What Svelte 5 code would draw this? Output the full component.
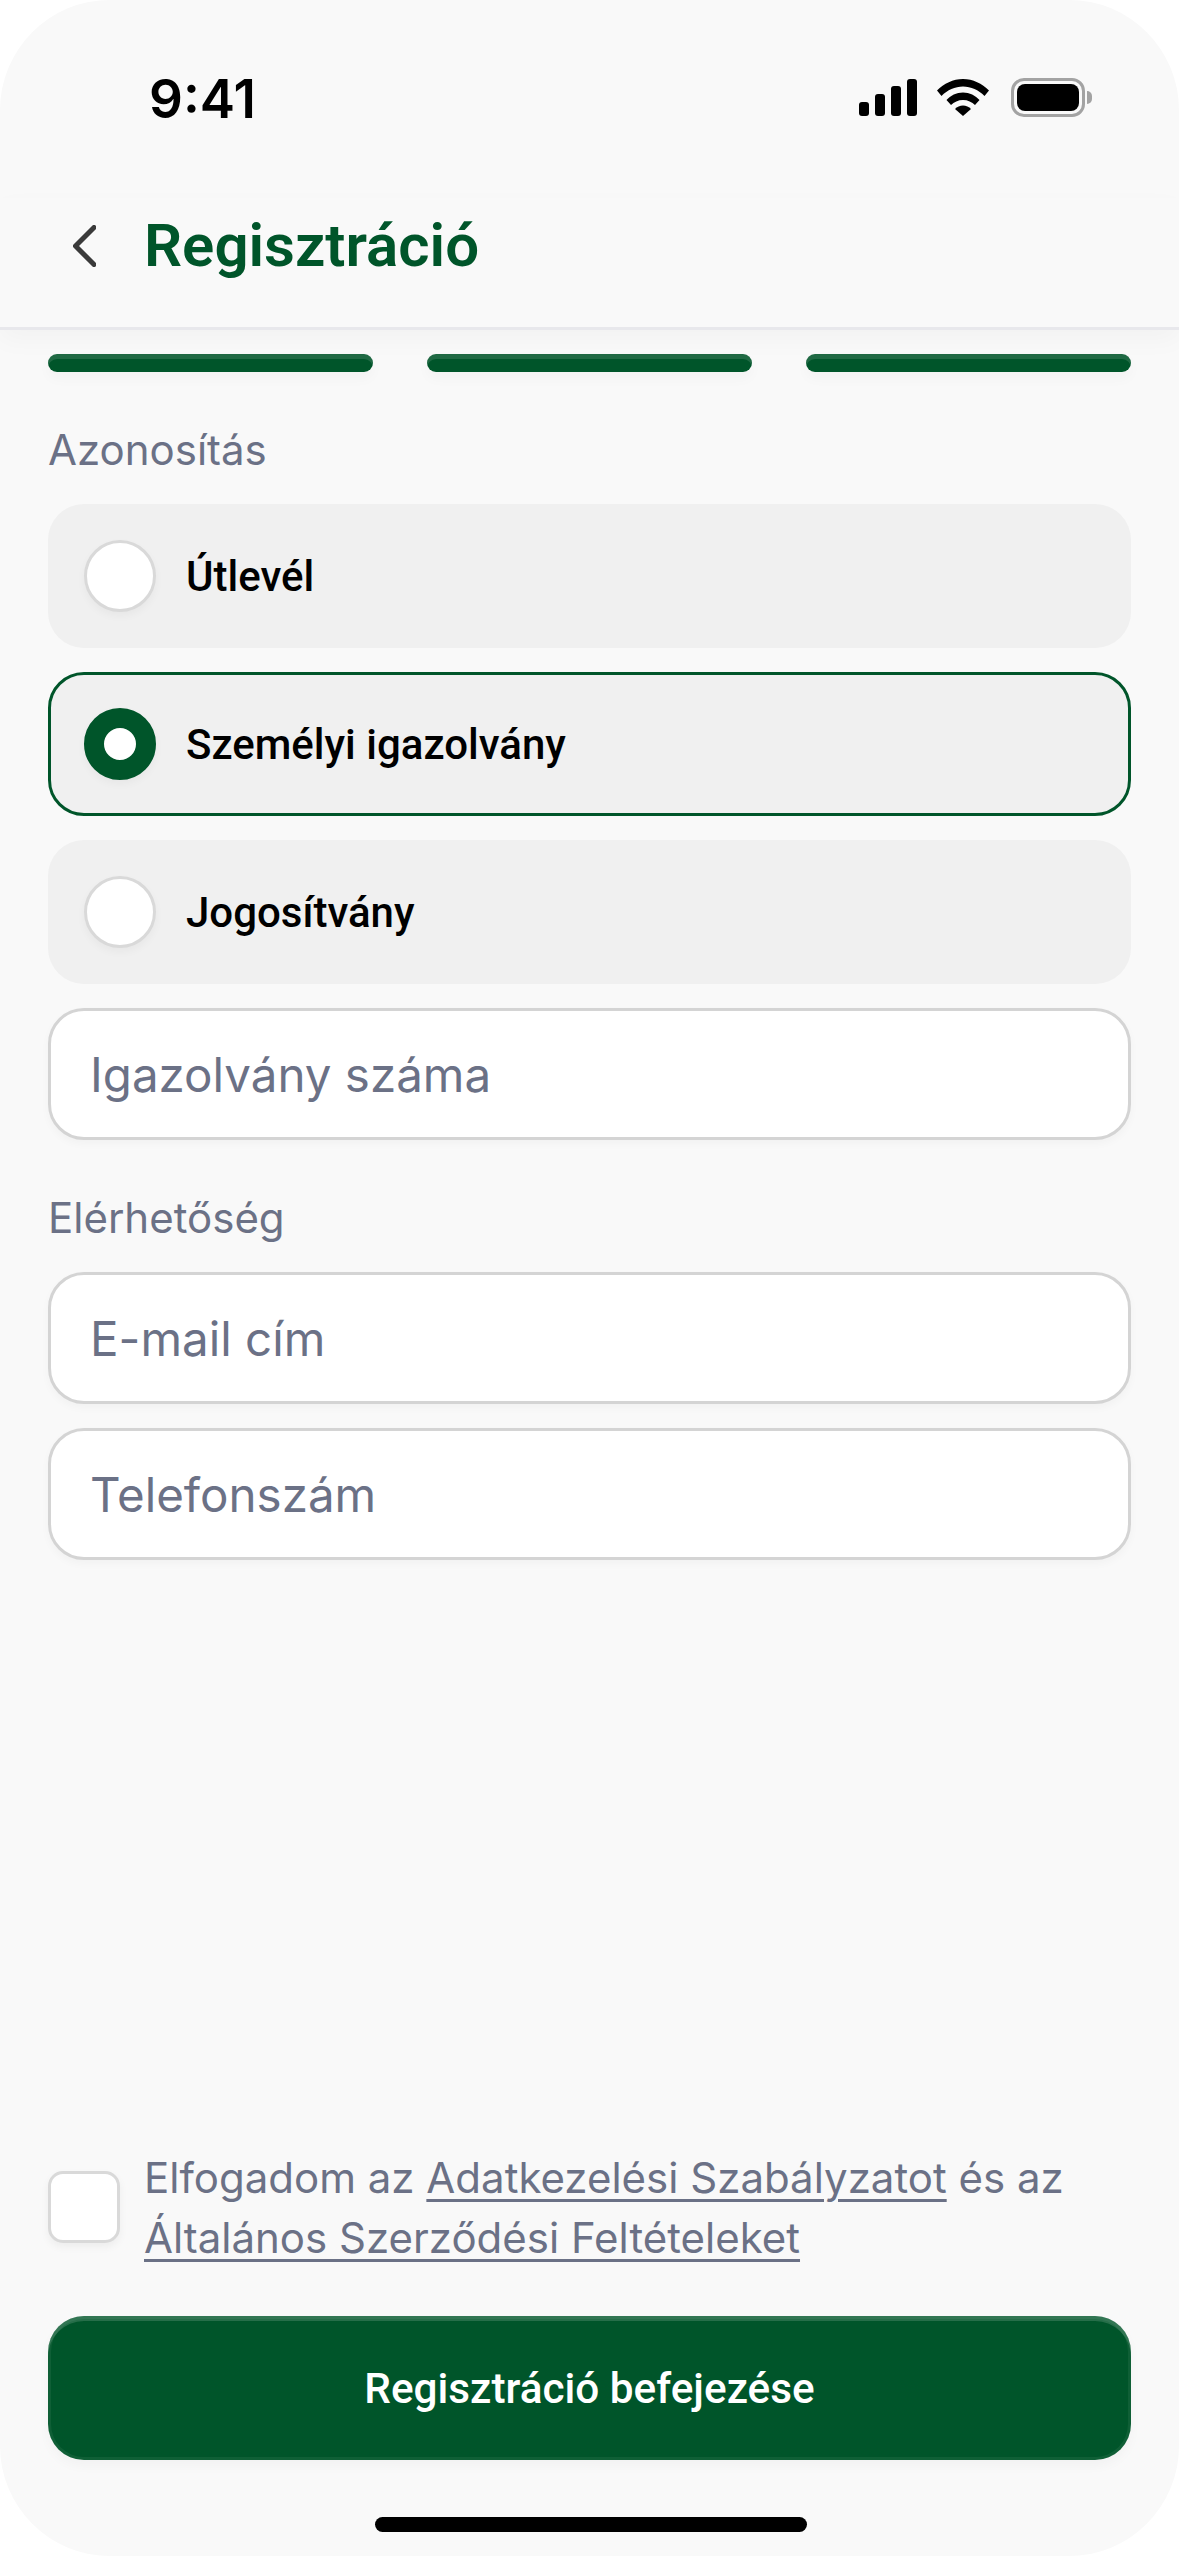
<script>
  const options = [
    { label: 'Útlevél', selected: false },
    { label: 'Személyi igazolvány', selected: true },
    { label: 'Jogosítvány', selected: false }
  ];
</script>

<div class="screen">
  <div class="status">
    <span class="time">9:41</span>
    <div class="status-icons">
      <svg class="signal" width="58" height="37" viewBox="0 0 58 37" fill="#000">
        <rect x="0" y="23" width="10" height="14" rx="3"/>
        <rect x="16" y="15" width="10" height="22" rx="3"/>
        <rect x="32" y="7" width="10" height="30" rx="3"/>
        <rect x="48" y="0" width="10" height="37" rx="3"/>
      </svg>
      <svg class="wifi" width="52" height="37" viewBox="0 0 52 37" fill="#000">
        <path d="M0 11.500C7 4.500 16 0 26 0s19 4.500 26 11.500l-4.500 5.500C41.500 11 34 7.500 26 7.500S10.500 11 4.500 17z"/>
        <path d="M9.500 21C13.500 16.500 19.500 13.500 26 13.500S38.500 16.500 42.500 21L38 26C35 23 30.800 21 26 21s-9 2-12 5z"/>
        <path d="M18 30c2-2.200 5-3.500 8-3.500s6 1.300 8 3.500l-8 7z"/>
      </svg>
      <div class="battery"><div class="battery-fill"></div></div>
    </div>
  </div>

  <header class="header">
    <svg class="back" width="23" height="42" viewBox="0 0 23 42" fill="none" stroke="#3a3a3a" stroke-width="5" stroke-linecap="round" stroke-linejoin="round">
      <path d="M21 2.500L2.500 21L21 39.500"/>
    </svg>
    <h1>Regisztráció</h1>
  </header>

  <main class="content">
    <div class="steps">
      <div class="step"></div>
      <div class="step"></div>
      <div class="step"></div>
    </div>

    <div class="label first">Azonosítás</div>
    <div class="options">
      {#each options as o}
        <div class="option" class:selected={o.selected}>
          <span class="radio" class:on={o.selected}></span>
          <span class="option-text">{o.label}</span>
        </div>
      {/each}
      <div class="input">Igazolvány száma</div>
    </div>

    <div class="label second">Elérhetőség</div>
    <div class="fields">
      <div class="input">E-mail cím</div>
      <div class="input">Telefonszám</div>
    </div>

    <div class="bottom">
      <div class="terms">
        <span class="checkbox"></span>
        <p>Elfogadom az <a href="#a">Adatkezelési Szabályzatot</a> és az <a href="#b">Általános Szerződési Feltételeket</a></p>
      </div>
      <button class="submit">Regisztráció befejezése</button>
      <div class="home"></div>
    </div>
  </main>
</div>

<style>
  :global(body) {
    margin: 0;
    background: #fff;
  }
  .screen {
    width: 1179px;
    height: 2556px;
    background: #f9f9f9;
    border-radius: 110px;
    display: flex;
    flex-direction: column;
    overflow: hidden;
    box-sizing: border-box;
  }
  .status {
    height: 198px;
    box-sizing: border-box;
    padding: 71px 94px 0 149px;
    display: flex;
    justify-content: space-between;
    align-items: flex-start;
  }
  .time {
    font-family: Inter, sans-serif;
    font-weight: 600;
    font-size: 53px;
    line-height: 56px;
    color: #000;
  }
  .status-icons {
    display: flex;
    align-items: flex-start;
    padding-top: 8px;
  }
  .wifi { margin-left: 20px; }
  .battery {
    position: relative;
    margin-left: 22px;
    margin-top: -1px;
    width: 74px;
    height: 39px;
    box-sizing: border-box;
    border: 3px solid #a3a3a3;
    border-radius: 13px;
    padding: 3px;
  }
  .battery::after {
    content: '';
    position: absolute;
    right: -10px;
    top: 10px;
    width: 5px;
    height: 13px;
    background: #a3a3a3;
    border-radius: 0 6px 6px 0;
  }
  .battery-fill {
    height: 100%;
    background: #000;
    border-radius: 8px;
  }
  .header {
    height: 132px;
    box-sizing: border-box;
    border-bottom: 3px solid #e8e8ec;
    padding: 0 0 0 73px;
    display: flex;
    align-items: center;
    gap: 48px;
    box-shadow: 0 10px 24px rgba(0, 0, 0, 0.03);
    position: relative;
  }
  .back {
    margin-bottom: 34px;
  }
  h1 {
    margin: 0 0 34px;
    font-family: Roboto, sans-serif;
    font-weight: 600;
    font-size: 60px;
    line-height: 70px;
    color: #00552a;
  }
  .content {
    flex: 1;
    display: flex;
    flex-direction: column;
    padding: 24px 48px 0;
    min-height: 0;
  }
  .steps {
    display: flex;
    gap: 54px;
  }
  .step {
    flex: 1;
    height: 18px;
    border-radius: 9px;
    background: #00552a;
    box-shadow: inset 0 5px 0 rgba(255, 255, 255, 0.12), 0 6px 14px rgba(0, 0, 0, 0.03);
  }
  .label {
    font-family: Inter, sans-serif;
    font-size: 42px;
    line-height: 46px;
    color: #6b7186;
  }
  .first { margin-top: 55px; }
  .second { margin-top: 55px; }
  .options {
    margin-top: 31px;
    display: flex;
    flex-direction: column;
    gap: 24px;
  }
  .option {
    height: 144px;
    box-sizing: border-box;
    background: #f0f0f0;
    border-radius: 36px;
    padding-left: 36px;
    display: flex;
    align-items: center;
    gap: 30px;
  }
  .option.selected {
    border: 3px solid #00552a;
    padding-left: 33px;
  }
  .radio {
    width: 72px;
    height: 72px;
    box-sizing: border-box;
    border-radius: 50%;
    background: #fff;
    border: 3px solid #d9d9d9;
    box-shadow: 0 4px 8px rgba(0, 0, 0, 0.04);
  }
  .radio.on {
    border: 20px solid #00552a;
    background: #fff;
  }
  .option-text {
    font-family: Roboto, sans-serif;
    font-weight: 500;
    font-size: 42px;
    line-height: 50px;
    padding-top: 2px;
    color: #000;
  }
  .input {
    height: 132px;
    box-sizing: border-box;
    background: #fff;
    border: 3px solid #d4d4d4;
    border-radius: 36px;
    padding-left: 39px;
    display: flex;
    align-items: center;
    font-family: Inter, sans-serif;
    font-size: 47.5px;
    color: #6b7186;
    box-shadow: 0 4px 8px rgba(0, 0, 0, 0.03);
  }
  .fields {
    margin-top: 31px;
    display: flex;
    flex-direction: column;
    gap: 24px;
  }
  .bottom {
    margin-top: auto;
    display: flex;
    flex-direction: column;
  }
  .terms {
    display: flex;
    align-items: center;
    gap: 24px;
  }
  .checkbox {
    flex: none;
    width: 72px;
    height: 72px;
    box-sizing: border-box;
    background: #fff;
    border: 3px solid #d9d9d9;
    border-radius: 15px;
    box-shadow: 0 4px 8px rgba(0, 0, 0, 0.05);
  }
  .terms p {
    margin: 0;
    padding-top: 2px;
    font-family: Inter, sans-serif;
    font-size: 42px;
    line-height: 60px;
    color: #6b7186;
  }
  .terms a {
    color: inherit;
    text-decoration: underline;
    text-decoration-thickness: 3px;
    text-underline-offset: 6px;
  }
  .submit {
    margin-top: 48px;
    height: 144px;
    border: none;
    border-radius: 36px;
    background: #00552a;
    box-shadow: inset 0 5px 0 rgba(255, 255, 255, 0.15), inset 0 0 0 3px rgba(255, 255, 255, 0.06), 0 6px 12px rgba(0, 0, 0, 0.03);
    color: #fff;
    font-family: Roboto, sans-serif;
    font-weight: 500;
    font-size: 42.3px;
  }
  .home {
    align-self: center;
    margin: 57px 0 24px 2px;
    width: 432px;
    height: 15px;
    border-radius: 8px;
    background: #000;
  }
</style>
